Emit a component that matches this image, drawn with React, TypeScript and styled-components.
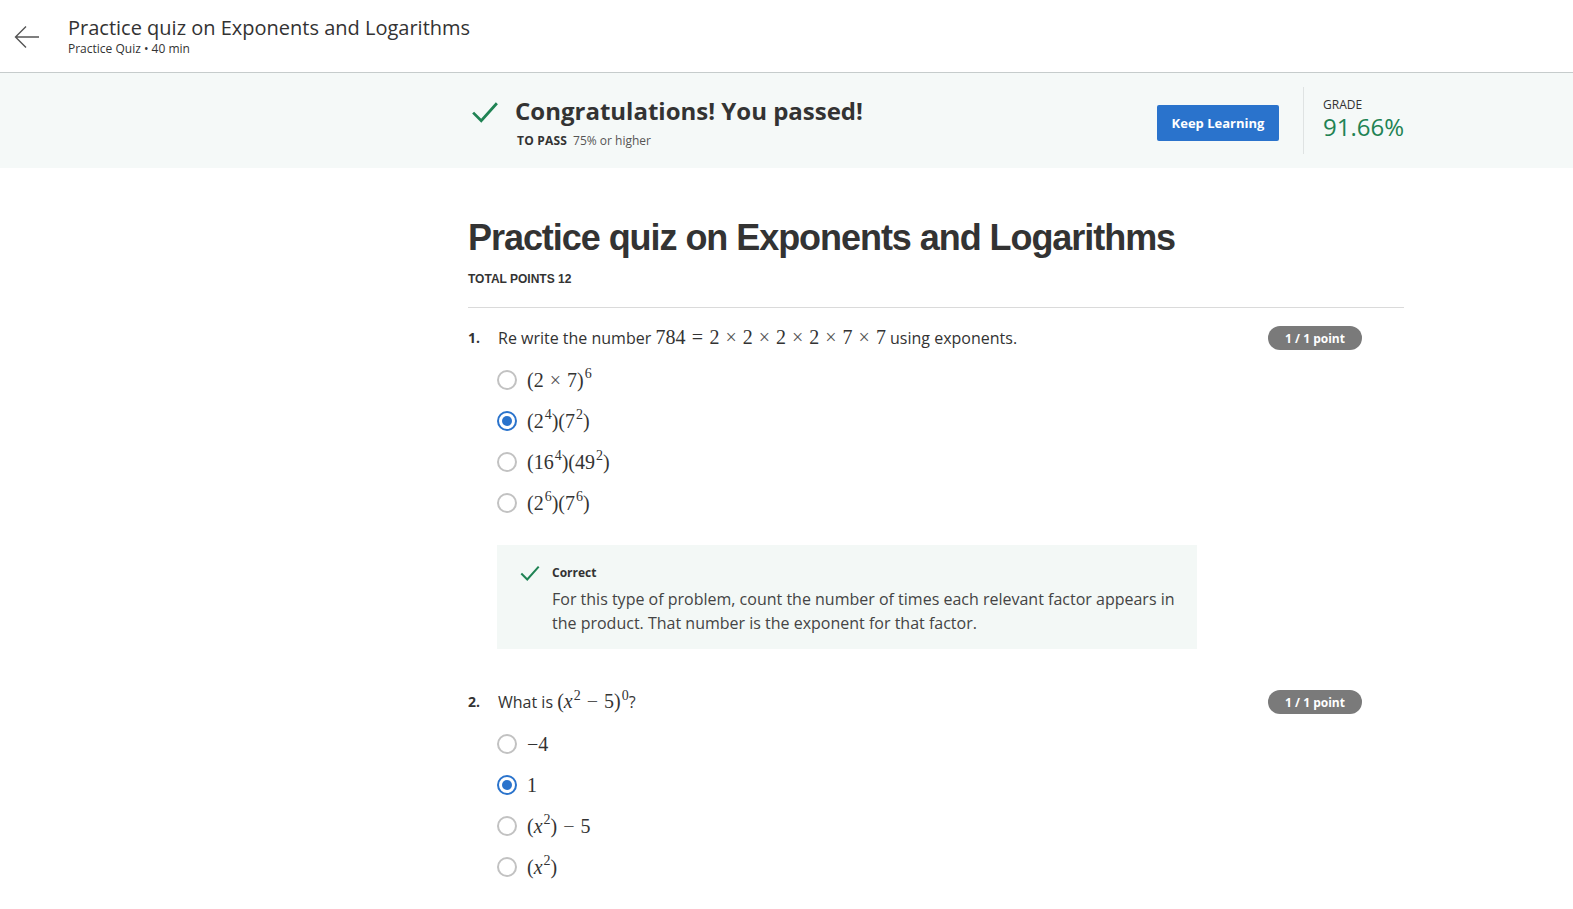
import React from "react";
import styled, { createGlobalStyle } from "styled-components";

const Global = createGlobalStyle`
  html, body { margin: 0; padding: 0; background: #ffffff; }
  body { font-family: "Open Sans", "Liberation Sans", Arial, sans-serif; color: #333333; }
  * { box-sizing: border-box; }
`;

const Header = styled.header`
  height: 73px;
  border-bottom: 1px solid #c6cccc;
  display: flex;
  align-items: center;
  padding-left: 14px;
`;

const BackButton = styled.div`
  width: 26px;
  height: 26px;
  display: flex;
  align-items: center;
  justify-content: center;
  margin-right: 28px;
  margin-top: 2px;
  color: #555;
`;

const HeaderText = styled.div`
  display: flex;
  flex-direction: column;
  margin-top: -1px;
`;

const HeaderTitle = styled.div`
  font-size: 20px;
  line-height: 26px;
  color: #333;
`;

const HeaderSub = styled.div`
  font-size: 12px;
  line-height: 15px;
  color: #333;
`;

const Banner = styled.section`
  background: #f5f9f8;
  height: 95px;
  display: grid;
  grid-template-columns: 470px 1fr;
`;

const BannerInner = styled.div`
  grid-column: 2;
  width: 933px;
  display: flex;
  align-items: center;
`;

const PassBlock = styled.div`
  display: flex;
  align-items: flex-start;
  flex: 1;
  margin-top: 3px;
`;

const PassCheck = styled.div`
  width: 30px;
  height: 30px;
  margin-right: 15px;
  margin-top: 2px;
`;

const PassTexts = styled.div`
  display: flex;
  flex-direction: column;
`;

const PassTitle = styled.div`
  font-size: 24px;
  line-height: 32px;
  font-weight: 700;
  color: #333;
`;

const PassSub = styled.div`
  font-size: 12px;
  line-height: 16px;
  margin-top: 6px;
  padding-left: 2px;
  color: #555;
  b { color: #333; font-weight: 700; margin-right: 6px; letter-spacing: 0.2px; }
`;

const KeepButton = styled.button`
  width: 122px;
  height: 36px;
  background: #2a73cc;
  border: none;
  border-radius: 2px;
  color: #fff;
  font-family: "Open Sans", sans-serif;
  font-size: 13px;
  font-weight: 700;
  margin-right: 24px;
  margin-top: 4px;
  padding: 0;
`;

const Divider = styled.div`
  width: 1px;
  height: 67px;
  background: #dfe3e3;
  margin-right: 19px;
`;

const GradeBlock = styled.div`
  display: flex;
  flex-direction: column;
  width: 80px;
  margin-top: -3px;
`;

const GradeLabel = styled.div`
  font-size: 12px;
  line-height: 16px;
  color: #333;
`;

const GradeValue = styled.div`
  font-size: 24px;
  line-height: 28px;
  color: #1f8354;
`;

const Main = styled.main`
  display: grid;
  grid-template-columns: 468px 936px;
  padding-top: 48px;
`;

const Content = styled.div`
  grid-column: 2;
`;

const QuizTitle = styled.h1`
  margin: 0;
  font-family: "Liberation Sans", Arial, sans-serif;
  font-size: 36px;
  line-height: 44px;
  font-weight: 700;
  color: #333;
  letter-spacing: -1.05px;
`;

const TotalPoints = styled.div`
  font-family: "Liberation Sans", Arial, sans-serif;
  font-size: 12px;
  line-height: 16px;
  font-weight: 700;
  color: #333;
  margin-top: 11px;
  padding-bottom: 20px;
  border-bottom: 1px solid #dadada;
`;

const Question = styled.div<{ $first?: boolean }>`
  margin-top: ${(p) => (p.$first ? "18px" : "41px")};
`;

const QuestionRow = styled.div`
  display: flex;
  align-items: flex-start;
  padding-right: 42px;
`;

const QNum = styled.div`
  width: 30px;
  font-size: 14px;
  line-height: 24px;
  font-weight: 700;
  color: #333;
`;

const QText = styled.div`
  flex: 1;
  font-size: 16px;
  line-height: 24px;
  color: #333;
`;

const PointBadge = styled.div`
  width: 94px;
  height: 24px;
  border-radius: 12px;
  background: #7a7a7a;
  color: #fff;
  font-size: 12px;
  font-weight: 700;
  display: flex;
  align-items: center;
  justify-content: center;
`;

const Options = styled.div<{ $gap: number }>`
  display: flex;
  flex-direction: column;
  margin-top: ${(p) => p.$gap}px;
  padding-left: 29px;
`;

const OptionRow = styled.label`
  height: 41px;
  display: flex;
  align-items: center;
`;

const Radio = styled.span<{ $checked?: boolean }>`
  width: 20px;
  height: 20px;
  border-radius: 50%;
  border: 2px solid ${(p) => (p.$checked ? "#2a73cc" : "#c2c2c2")};
  display: flex;
  align-items: center;
  justify-content: center;
  margin-right: 10px;
  flex-shrink: 0;
  &::after {
    content: "";
    display: ${(p) => (p.$checked ? "block" : "none")};
    width: 10px;
    height: 10px;
    border-radius: 50%;
    background: #2a73cc;
  }
`;

const Math = styled.span`
  font-family: "Liberation Serif", "DejaVu Serif", serif;
  font-size: 20px;
  line-height: 0;
  color: #333;
  white-space: nowrap;
`;

const OptionMath = styled(Math)`
  line-height: 24px;
`;

const Sup = styled.sup`
  font-size: 0.7em;
  line-height: 0;
  vertical-align: 0.6em;
  margin-left: 1px;
`;

const Bin = styled.span`
  margin: 0 0.3em;
  color: #555;
`;

const Rel = styled.span`
  margin: 0 0.32em;
`;

const Italic = styled.i`
  font-style: italic;
`;

const Feedback = styled.div`
  margin-top: 22px;
  margin-left: 29px;
  width: 700px;
  background: #f3f8f6;
  padding: 20px 20px 14px 22px;
  display: flex;
  align-items: flex-start;
`;

const FeedbackIcon = styled.div`
  width: 22px;
  height: 16px;
  margin-right: 11px;
  display: flex;
  align-items: center;
`;

const FeedbackBody = styled.div`
  display: flex;
  flex-direction: column;
`;

const FeedbackTitle = styled.div`
  font-size: 12px;
  line-height: 16px;
  font-weight: 700;
  color: #333;
`;

const FeedbackText = styled.div`
  font-size: 16px;
  line-height: 24px;
  color: #444;
  margin-top: 6px;
`;

const CheckIcon = ({ size }: { size: number }) => (
  <svg width={size} height={size} viewBox="0 0 24 24" fill="none">
    <path d="M2.5 12.5 L9 19 L21.5 5" stroke="#1f8354" strokeWidth="2.2" />
  </svg>
);

const x = <Italic>x</Italic>;

type Opt = { content: React.ReactNode; checked?: boolean };

const QuestionBlock = ({
  num,
  text,
  options,
  first,
  gap,
  children,
}: {
  num: string;
  text: React.ReactNode;
  options: Opt[];
  first?: boolean;
  gap: number;
  children?: React.ReactNode;
}) => (
  <Question $first={first}>
    <QuestionRow>
      <QNum>{num}</QNum>
      <QText>{text}</QText>
      <PointBadge>1 / 1 point</PointBadge>
    </QuestionRow>
    <Options $gap={gap}>
      {options.map((o, i) => (
        <OptionRow key={i}>
          <Radio $checked={o.checked} />
          <OptionMath>{o.content}</OptionMath>
        </OptionRow>
      ))}
    </Options>
    {children}
  </Question>
);

export default function App() {
  return (
    <>
      <Global />
      <Header>
        <BackButton>
          <svg width="26" height="26" viewBox="0 0 26 26" fill="none">
            <path d="M25 13 H1.5 M12 2.5 L1.5 13 L12 23.5" stroke="#555" strokeWidth="1.4" />
          </svg>
        </BackButton>
        <HeaderText>
          <HeaderTitle>Practice quiz on Exponents and Logarithms</HeaderTitle>
          <HeaderSub>Practice Quiz • 40 min</HeaderSub>
        </HeaderText>
      </Header>

      <Banner>
        <BannerInner>
          <PassBlock>
            <PassCheck>
              <CheckIcon size={30} />
            </PassCheck>
            <PassTexts>
              <PassTitle>Congratulations! You passed!</PassTitle>
              <PassSub>
                <b>TO PASS</b>75% or higher
              </PassSub>
            </PassTexts>
          </PassBlock>
          <KeepButton>Keep Learning</KeepButton>
          <Divider />
          <GradeBlock>
            <GradeLabel>GRADE</GradeLabel>
            <GradeValue>91.66%</GradeValue>
          </GradeBlock>
        </BannerInner>
      </Banner>

      <Main>
        <Content>
          <QuizTitle>Practice quiz on Exponents and Logarithms</QuizTitle>
          <TotalPoints>TOTAL POINTS 12</TotalPoints>

          <QuestionBlock
            first
            gap={9}
            num="1."
            text={
              <>
                Re write the number{" "}
                <Math>
                  784<Rel>=</Rel>2<Bin>×</Bin>2<Bin>×</Bin>2<Bin>×</Bin>2<Bin>×</Bin>7<Bin>×</Bin>7
                </Math>{" "}
                using exponents.
              </>
            }
            options={[
              { content: <>(2<Bin>×</Bin>7)<Sup>6</Sup></> },
              { content: <>(2<Sup>4</Sup>)(7<Sup>2</Sup>)</>, checked: true },
              { content: <>(16<Sup>4</Sup>)(49<Sup>2</Sup>)</> },
              { content: <>(2<Sup>6</Sup>)(7<Sup>6</Sup>)</> },
            ]}
          >
            <Feedback>
              <FeedbackIcon>
                <CheckIcon size={22} />
              </FeedbackIcon>
              <FeedbackBody>
                <FeedbackTitle>Correct</FeedbackTitle>
                <FeedbackText>
                  For this type of problem, count the number of times each relevant factor appears in
                  <br />
                  the product. That number is the exponent for that factor.
                </FeedbackText>
              </FeedbackBody>
            </Feedback>
          </QuestionBlock>

          <QuestionBlock
            gap={9}
            num="2."
            text={
              <>
                What is{" "}
                <Math>
                  ({x}<Sup>2</Sup><Bin>−</Bin>5)<Sup>0</Sup>
                </Math>
                ?
              </>
            }
            options={[
              { content: <>−4</> },
              { content: <>1</>, checked: true },
              { content: <>({x}<Sup>2</Sup>)<Bin>−</Bin>5</> },
              { content: <>({x}<Sup>2</Sup>)</> },
            ]}
          />
        </Content>
      </Main>
    </>
  );
}
